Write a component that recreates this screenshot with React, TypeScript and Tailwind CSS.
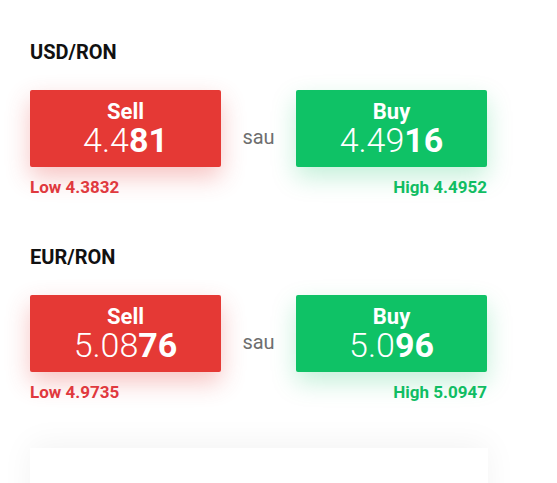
import React from 'react';

interface Pair {
  symbol: string;
  sellLight: string;
  sellBold: string;
  buyLight: string;
  buyBold: string;
  low: string;
  high: string;
}

const pairs: Pair[] = [
  { symbol: 'USD/RON', sellLight: '4.4', sellBold: '81', buyLight: '4.49', buyBold: '16', low: '4.3832', high: '4.4952' },
  { symbol: 'EUR/RON', sellLight: '5.08', sellBold: '76', buyLight: '5.0', buyBold: '96', low: '4.9735', high: '5.0947' },
];

const PriceBox: React.FC<{ label: string; light: string; bold: string; kind: 'sell' | 'buy' }> = ({ label, light, bold, kind }) => (
  <div
    className={`h-[77px] rounded-[2px] flex flex-col items-center justify-center text-white ${
      kind === 'sell'
        ? 'bg-[#e53935] shadow-[0_10px_24px_rgba(229,57,53,0.3)]'
        : 'bg-[#0fc266] shadow-[0_10px_24px_rgba(15,194,102,0.25)]'
    }`}
  >
    <div className="text-[22px] leading-[22px] font-bold">{label}</div>
    <div className="text-[34px] leading-[34px]">
      <span className="font-light">{light}</span>
      <span className="font-bold">{bold}</span>
    </div>
  </div>
);

export default function App() {
  return (
    <div className="h-[483px] w-full overflow-hidden bg-white font-['Roboto','Liberation_Sans',sans-serif]">
      <div className="w-[457px] ml-[30px] pt-[38px]">
        {pairs.map((p, i) => (
          <div key={p.symbol} className={i > 0 ? 'mt-[44px]' : ''}>
            <h2 className="text-[20px] leading-[28px] font-bold text-[#111111]">{p.symbol}</h2>
            <div className="mt-[24px] grid grid-cols-[191px_1fr_191px] gap-y-[8px] items-center">
              <PriceBox label="Sell" light={p.sellLight} bold={p.sellBold} kind="sell" />
              <div className="pt-[16px] text-center text-[20px] leading-[20px] text-[#6e6e6e]">sau</div>
              <PriceBox label="Buy" light={p.buyLight} bold={p.buyBold} kind="buy" />
              <div className="text-[17px] leading-[24px] font-bold text-[#e0393e]">Low {p.low}</div>
              <div />
              <div className="text-[17px] leading-[24px] font-bold text-right text-[#10bd63]">High {p.high}</div>
            </div>
          </div>
        ))}
        <div className="mt-[44px] h-[100px] w-[458px] bg-white shadow-[0_-4px_30px_rgba(0,0,0,0.05)]" />
      </div>
    </div>
  );
}
